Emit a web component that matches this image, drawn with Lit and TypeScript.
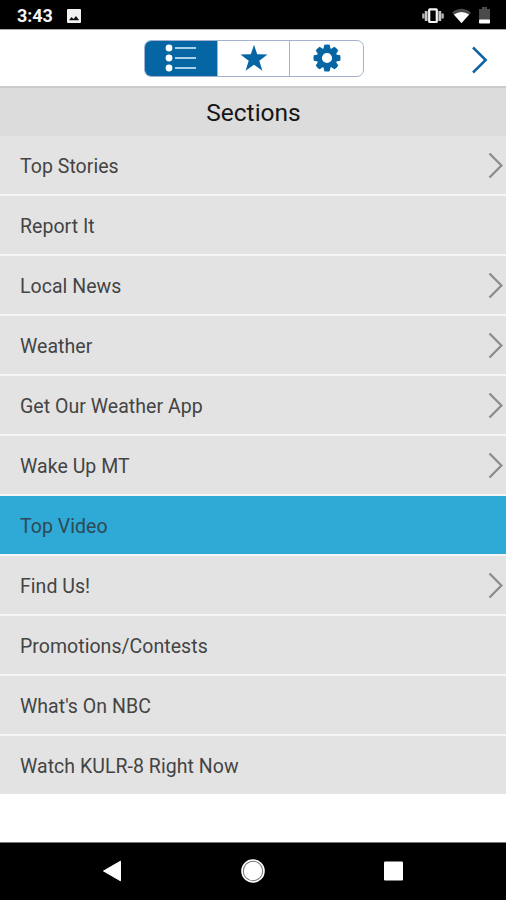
import { LitElement, html, css, svg, nothing } from "lit";
import { customElement, property, state } from "lit/decorators.js";
import { classMap } from "lit/directives/class-map.js";

interface Section {
  label: string;
  more: boolean;
}

const SECTIONS: Section[] = [
  { label: "Top Stories", more: true },
  { label: "Report It", more: false },
  { label: "Local News", more: true },
  { label: "Weather", more: true },
  { label: "Get Our Weather App", more: true },
  { label: "Wake Up MT", more: true },
  { label: "Top Video", more: false },
  { label: "Find Us!", more: true },
  { label: "Promotions/Contests", more: false },
  { label: "What's On NBC", more: false },
  { label: "Watch KULR-8 Right Now", more: false },
];

@customElement("status-bar")
class StatusBar extends LitElement {
  static styles = css`
    :host { display: flex; align-items: center; height: 29px; box-sizing: border-box;
      padding: 2px 16px 0 17px; background: #000; color: #f4f4f4; }
    .time { font: 700 18px/26px Roboto, sans-serif; width: 50px; letter-spacing: -0.1px; }
    .photo { width: 14px; height: 14px; }
    .icons { margin-left: auto; display: flex; align-items: center; gap: 8px; }
    svg { display: block; }
  `;
  render() {
    return html`
      <span class="time">3:43</span>
      <svg class="photo" viewBox="0 0 14 14">
        <rect width="14" height="14" rx="1" fill="#f2f2f2" />
        <path d="M2 11.3 4.5 8l2 2L9 7l3.2 4.3z" fill="#111" />
      </svg>
      <div class="icons">
        <svg width="22" height="16" viewBox="0 0 22 16">
          <rect x="7.2" y="1.4" width="7.6" height="12.6" rx=".6" fill="none" stroke="#f6f6f6" stroke-width="2.2" />
          <path d="M4.2 3v10M17.8 3v10" stroke="#c4c4c4" stroke-width="2.8" />
          <path d="M1.4 5.5v5M20.6 5.5v5" stroke="#b4b4b4" stroke-width="2.4" />
        </svg>
        <svg width="19" height="16" viewBox="0 0 19 16">
          <path d="M0 4.5Q9.5-3 19 4.5L9.5 15.5z" fill="#4a4a4a" />
          <path d="M1.8 6.5Q9.5 1.5 17.2 6.5L9.5 15z" fill="#fff" />
        </svg>
        <svg width="11" height="17" viewBox="0 0 11 17">
          <path d="M0 2h3V0h5v2h3v11H0z" fill="#4a4a4a" />
          <rect y="12.5" width="11" height="4" rx=".8" fill="#fff" />
        </svg>
      </div>
    `;
  }
}

@customElement("app-toolbar")
class AppToolbar extends LitElement {
  @state() private tab = 0;

  static styles = css`
    :host { display: grid; grid-template-columns: 144px 220px 1fr; align-items: center;
      height: 59px; box-sizing: border-box; background: #fff;
      border-top: 1px solid #a9a9a9; border-bottom: 2px solid #cbcbcb; }
    .tabs { grid-column: 2; display: grid; grid-template-columns: 72px 72px 1fr; height: 37px;
      box-sizing: border-box; border: 1px solid #a4b2cf; border-radius: 7px; overflow: hidden; }
    .tab { display: flex; align-items: center; justify-content: center; color: #0665a3; cursor: pointer; }
    .tab + .tab { border-left: 1px solid #a9b0cc; }
    .tab.active { background: #0665a3; color: #fff; }
    .next { justify-self: end; margin: 4px 18px 0 0; }
    svg { display: block; }
  `;

  private gear() {
    const teeth = [0, 45, 90, 135, 180, 225, 270, 315];
    return html`<svg width="28" height="28" viewBox="-14 -14 28 28">
      ${teeth.map(
        (a) => svg`<path d="M-3.6 -9 -2.7 -13.2Q0 -13.9 2.7 -13.2L3.6 -9z" fill="currentColor" transform="rotate(${a})" />`
      )}
      <circle r="7.6" fill="none" stroke="currentColor" stroke-width="5" />
    </svg>`;
  }

  private list() {
    return html`<svg width="32" height="28" viewBox="0 0 32 28">
      ${[4, 14, 24].map(
        (y) => svg`<circle cx="4" cy=${y} r="3.4" fill="#fff" /><path d="M10 ${y}h21" stroke="#a9d0ea" stroke-width="2" />`
      )}
    </svg>`;
  }

  private star() {
    return html`<svg width="28" height="28" viewBox="0 0 28 28">
      <path d="M14 .8 17.2 10.3 27.5 10.5 19.3 16.7 22.4 26.7 14 20.8 5.6 26.7 8.7 16.7 .5 10.5 10.8 10.3z" fill="currentColor" />
    </svg>`;
  }

  render() {
    const icons = [this.list(), this.star(), this.gear()];
    return html`
      <div class="tabs">
        ${icons.map(
          (icon, i) => html`<div class=${classMap({ tab: true, active: i === this.tab })} @click=${() => (this.tab = i)}>${icon}</div>`
        )}
      </div>
      <svg class="next" width="17" height="28" viewBox="0 0 17 28">
        <path d="M2 1.5 14.7 14 2 26.5" fill="none" stroke="#1164a3" stroke-width="2.5" />
      </svg>
    `;
  }
}

@customElement("section-row")
class SectionRow extends LitElement {
  @property() label = "";
  @property({ type: Boolean }) more = false;

  static styles = css`
    :host { display: flex; align-items: center; justify-content: space-between; height: 60px;
      box-sizing: border-box; padding: 0 3px 0 20px; background: #e3e3e3;
      border-bottom: 2px solid #f6f6f6; color: #444;
      font: 400 19.5px/30px Roboto, sans-serif; letter-spacing: 0.04px; cursor: pointer; }
    :host(:last-of-type) { border-bottom-color: #fff; }
    :host([selected]) { background: #2fa9d6; color: #2d4a55; }
    .label { padding-top: 4px; white-space: nowrap; }
    svg { display: block; }
  `;
  render() {
    return html`<span class="label">${this.label}</span>
      ${this.more
        ? html`<svg width="16" height="28" viewBox="0 0 16 28">
            <path d="M2.5 2.5 14.4 14.5 2.5 26.5" fill="none" stroke="#8d8d8d" stroke-width="2.4" />
          </svg>`
        : nothing}`;
  }
}

@customElement("nav-bar")
class NavBar extends LitElement {
  static styles = css`
    :host { display: grid; grid-template-columns: 1fr 58px 1fr; align-items: center; height: 58px;
      box-sizing: border-box; padding: 0 103px 2px 102px; background: #000; border-top: 1px solid #777; }
    svg { display: block; justify-self: center; }
    .back { justify-self: start; }
    .recent { justify-self: end; }
  `;
  render() {
    return html`
      <svg class="back" width="20" height="22" viewBox="0 0 20 22">
        <path d="M1.5 11 18.5 1.2v19.6z" fill="#fff" stroke="#fff" stroke-linejoin="round" />
      </svg>
      <svg width="24" height="24" viewBox="0 0 24 24">
        <circle cx="12" cy="12" r="11" fill="#777" stroke="#fff" stroke-width="1.6" />
        <circle cx="12" cy="12" r="9.2" fill="#fff" />
      </svg>
      <svg class="recent" width="19" height="20" viewBox="0 0 19 20">
        <rect y=".5" width="19" height="19" rx="1.2" fill="#fff" />
      </svg>
    `;
  }
}

@customElement("app-root")
class AppRoot extends LitElement {
  @state() private selected = 6;

  static styles = css`
    :host { display: flex; flex-direction: column; height: 900px; background: #fff; overflow: hidden; }
    .title { flex: none; height: 48px; background: #dcdcdc; color: #161616; text-align: center;
      font: 400 24.5px/49px Roboto, sans-serif; padding-left: 1px; }
    .list { flex: 1; }
    status-bar, app-toolbar, nav-bar { flex: none; }
  `;
  render() {
    return html`
      <status-bar></status-bar>
      <app-toolbar></app-toolbar>
      <div class="title">Sections</div>
      <div class="list">
        ${SECTIONS.map(
          (s, i) => html`<section-row
            .label=${s.label}
            .more=${s.more}
            ?selected=${i === this.selected}
            @click=${() => (this.selected = i)}
          ></section-row>`
        )}
      </div>
      <nav-bar></nav-bar>
    `;
  }
}
